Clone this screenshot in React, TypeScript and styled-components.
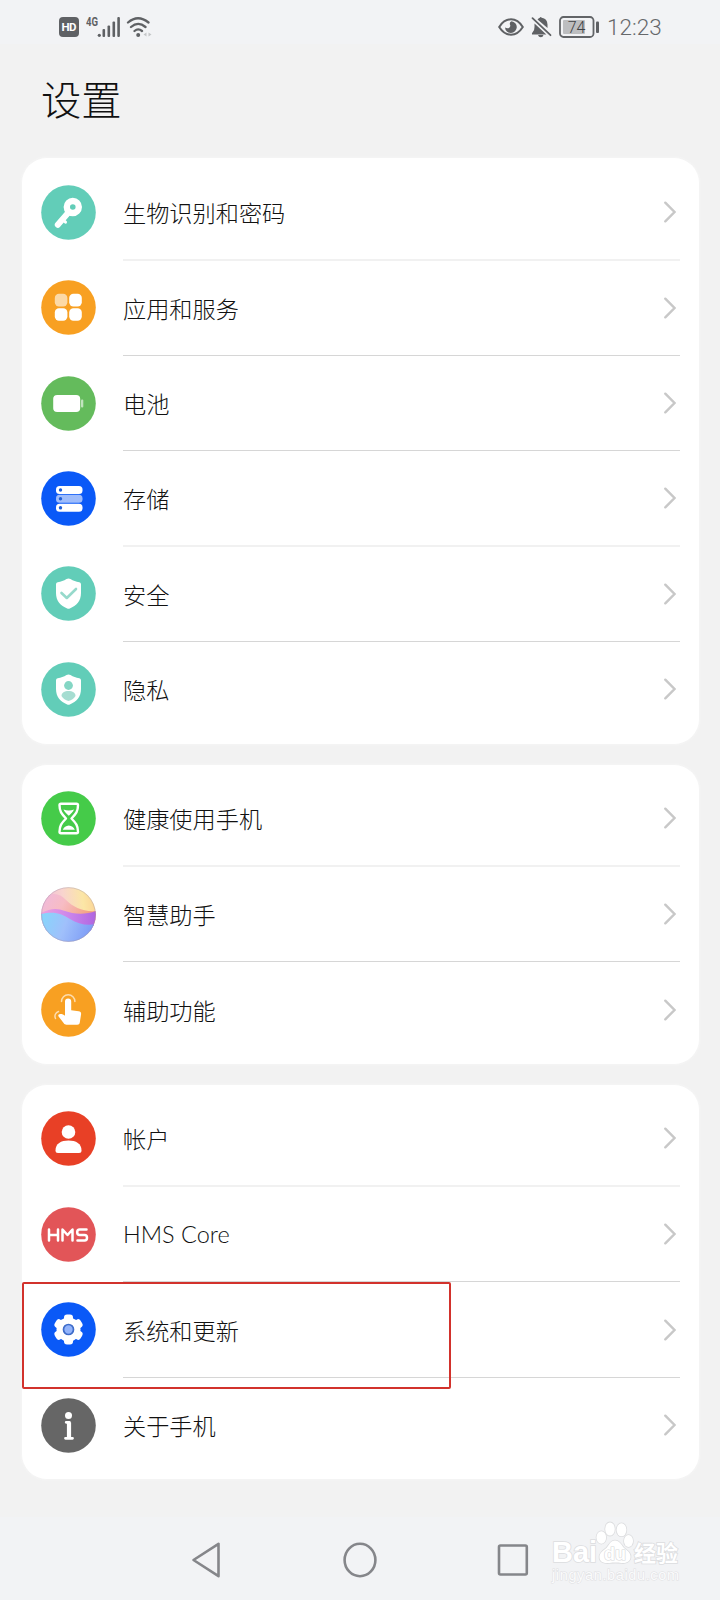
import React from 'react';
import styled, { createGlobalStyle } from 'styled-components';

const GlobalStyle = createGlobalStyle`
  * { box-sizing: border-box; }
  body {
    margin: 0;
    background: #f2f2f2;
    font-family: "Noto Sans CJK SC", sans-serif;
    color: #111;
  }
`;

const Screen = styled.div`
  position: relative;
  width: 720px;
  height: 1600px;
  overflow: hidden;
  background: #f2f2f2;
  display: flex;
  flex-direction: column;

  > * { flex: none; }
`;

const StatusBar = styled.header`
  height: 44px;
  padding: 9px 59px 0 59px;
  background: #f2f3f5;
  display: flex;
  justify-content: space-between;
`;

const StatusGroup = styled.div`
  display: flex;
  height: 35px;
  align-items: center;
`;

const StatusSvg = styled.svg<{ $gap?: number }>`
  display: block;
  margin-left: ${(p) => p.$gap ?? 0}px;
`;

const Clock = styled.span`
  width: 54px;
  margin-left: 7px;
  font: 300 22.5px/36px Roboto, sans-serif;
  color: #66686b;
  white-space: nowrap;
`;

const Title = styled.h1`
  margin: 0;
  height: 114px;
  padding: 24px 0 0 41px;
  font-size: 40.3px;
  line-height: 60px;
  font-weight: 300;
`;

const Card = styled.section<{ $height: number }>`
  height: ${(p) => p.$height}px;
  margin: 0 21px 21px 22px;
  padding: 7.2px 19px 0 18.7px;
  border-radius: 25px;
  background: #fff;
  box-shadow: 0 0 3px #fafafa;
`;

const Row = styled.div`
  display: flex;
  align-items: center;
  height: 95.4px;
`;

const Badge = styled.svg`
  flex: none;
  width: 55px;
  height: 55px;
  margin-top: -1px;
`;

const RowBody = styled.div<{ $line: 'none' | 'thin' | 'soft' }>`
  flex: 1;
  height: 100%;
  margin-left: 27.3px;
  padding-right: 4px;
  display: flex;
  align-items: center;
  justify-content: space-between;
  border-bottom: ${(p) =>
    p.$line === 'none' ? '1px solid transparent' : p.$line === 'soft' ? '2px solid #f1f1f1' : '1px solid #d6d6d6'};
`;

const Label = styled.span<{ $latin?: boolean }>`
  font-size: 23.2px;
  line-height: 34px;
  font-weight: 300;
  white-space: nowrap;
  ${(p) => p.$latin && 'font-family: Lato, sans-serif; font-size: 23.5px; letter-spacing: 0;'}
`;

const Chevron = styled.svg`
  width: 12px;
  height: 22px;
`;

const NavBar = styled.nav`
  margin-top: 17px;
  height: 84px;
  padding: 3px 191px 0 191px;
  background: #f2f3f5;
  display: flex;
  align-items: center;
  justify-content: space-between;
`;

const Highlight = styled.div`
  position: absolute;
  left: 22px;
  top: 1281.5px;
  width: 429px;
  height: 107px;
  border: 2px solid #d2322c;
  border-radius: 2px;
`;

const Watermark = styled.svg`
  position: absolute;
  left: 545px;
  top: 1515px;
`;

const teal = '#62cdb8';
const shield = 'M27.5 12.5c.7 0 1.300.2 2 .6 2.800 1.700 5.500 2.600 8.700 3.200 1.200.3 1.800 1 1.800 2.200v8.500c0 8-4.500 12.500-11.200 15.500q-1.300.6-2.600 0C19.500 39.500 15 35 15 27v-8.500c0-1.200.6-1.900 1.800-2.200 3.200-.6 5.900-1.500 8.700-3.200.7-.4 1.300-.6 2-.6z';

const KeyIcon = () => (
  <g fill="none" stroke="#fff">
    <circle cx="31.800" cy="22" r="6" strokeWidth="6.400" />
    <path d="M27 28 L16.800 39.800" strokeWidth="6" strokeLinecap="round" />
    <path d="M21 34l3.500 3.200" strokeWidth="3" strokeLinecap="round" />
  </g>
);

const AppsIcon = () => (
  <g fill="#fff">
    <rect x="13.800" y="13.800" width="12.600" height="12.600" rx="4.200" opacity=".6" />
    <rect x="28.200" y="13.800" width="12.600" height="12.600" rx="4.200" />
    <rect x="13.800" y="28.200" width="12.600" height="12.600" rx="4.200" />
    <rect x="28.200" y="28.200" width="12.600" height="12.600" rx="4.200" />
  </g>
);

const BatteryIcon = () => (
  <g fill="#fff">
    <rect x="12.200" y="19" width="27" height="17" rx="4" />
    <rect x="40" y="23.500" width="2.300" height="8" rx="1" opacity=".6" />
  </g>
);

const StorageIcon = () => (
  <g>
    {[15, 23.800, 32.800].map((y, i) => (
      <g key={y}>
        <rect x="15" y={y} width="26.500" height="8" rx="3.500" fill={i === 1 ? '#9ebcfb' : '#fff'} />
        <circle cx="19.500" cy={y + 4} r="1.700" fill="#1f5fd8" />
      </g>
    ))}
  </g>
);

const SecurityIcon = () => (
  <g>
    <path d={shield} fill="#fff" />
    <path d="M20.500 27l5.300 5 9.200-9" fill="none" stroke="#96d9cb" strokeWidth="2.600" strokeLinecap="round" strokeLinejoin="round" />
  </g>
);

const PrivacyIcon = () => (
  <g>
    <path d={shield} fill="#fff" />
    <circle cx="27.500" cy="23.500" r="4.400" fill="#84d6c4" />
    <path d="M20.500 34c0-3.500 3-5 7-5s7 1.500 7 5c-1.500 2.600-4 4.500-7 5-3-.5-5.500-2.400-7-5z" fill="#a6ddd1" />
  </g>
);

const HourglassIcon = () => (
  <g fill="none" stroke="#fff" strokeWidth="2.400" strokeLinejoin="round">
    <path d="M20 12.800h15.500q1.500 0 1.500 1.500c0 6-2 8.500-6.500 13.200 4.500 4.700 6.500 7.200 6.500 13.200q0 1.500-1.500 1.500H20q-1.500 0-1.500-1.500c0-6 2-8.500 6.500-13.200-4.500-4.700-6.500-7.200-6.500-13.200q0-1.500 1.500-1.500z" />
    <path d="M22.500 18.500q5.300 2 10.500 0c-1 2.500-3 4-5.200 6.300-2.300-2.300-4.300-3.800-5.300-6.300zM21.800 38.800q1.700-4 6-4.400 4.300.4 6 4.400z" fill="#fff" stroke="none" />
  </g>
);

const AssistantIcon = () => (
  <>
    <defs>
      <clipPath id="orb"><circle cx="27.500" cy="27.500" r="27.300" /></clipPath>
      <linearGradient id="sky" x1="0" y1=".2" x2="1" y2=".1">
        <stop offset="0" stopColor="#efb9d8" /><stop offset=".4" stopColor="#f8d4ce" /><stop offset=".75" stopColor="#fbe6a6" /><stop offset="1" stopColor="#fbd293" />
      </linearGradient>
      <linearGradient id="dusk" x1="0" y1="0" x2="1" y2=".35">
        <stop offset="0" stopColor="#efbade" /><stop offset=".45" stopColor="#f7bcc4" /><stop offset="1" stopColor="#f3a07c" />
      </linearGradient>
      <linearGradient id="violet" x1="0" y1="0" x2="1" y2="0">
        <stop offset="0" stopColor="#f0a0dc" /><stop offset=".5" stopColor="#cb86ec" /><stop offset="1" stopColor="#b065e0" />
      </linearGradient>
      <linearGradient id="sea" x1="0" y1="0" x2="1" y2=".2">
        <stop offset="0" stopColor="#85d7fb" /><stop offset=".5" stopColor="#a0c0fb" /><stop offset="1" stopColor="#7d9cf6" />
      </linearGradient>
    </defs>
    <g clipPath="url(#orb)">
      <rect width="55" height="55" fill="url(#sky)" />
      <path d="M0 14C10 4 18 6 25 13s17 12 30 11v15H0z" fill="url(#dusk)" />
      <path d="M0 26c10-5 16-5 24-2s20 4 31 0v20H0z" fill="url(#violet)" />
      <path d="M0 27c14-3 21 0 29 5s17 7 26 5v18H0z" fill="url(#sea)" />
    </g>
    <circle cx="27.500" cy="27.500" r="26.900" fill="none" stroke="#9a8fa8" strokeOpacity=".45" strokeWidth=".8" />
  </>
);

const TouchIcon = () => (
  <g fill="#fff">
    <path d="M24 19.500a3.100 3.100 0 0 1 6.200 0v8.700l7.500 1c1.800.3 2.600 1.300 2.400 3l-1.300 8.300c-.3 1.500-1 2.200-2.600 2.200H25.500c-1.300 0-2-.4-2.700-1.400l-5.200-6.800c-.8-1.300 0-2.500 1.500-2.600 2-.1 3.400.4 4.900 1.800z" />
    <path d="M20.500 19.500a6.700 6.700 0 0 1 13.400 0M17.500 29.500a5 5 0 0 0-3 7" fill="none" stroke="#fcdcae" strokeWidth="1.500" strokeLinecap="round" />
  </g>
);

const AccountIcon = () => (
  <g fill="#fff">
    <circle cx="27.500" cy="21" r="6.800" />
    <path d="M14.500 39.500C14.500 32.500 20 29.500 27.500 29.500s13 3 13 10q0 2.500-2.500 2.500H17q-2.500 0-2.500-2.500z" />
  </g>
);

const HmsIcon = () => (
  <g fill="none" stroke="#fff" strokeWidth="2.500" strokeLinecap="round" strokeLinejoin="round">
    <path d="M8 22.500v11M17 22.500v11M8 28h9M21.500 33.500v-11l5 5.500 5-5.500v11" />
    <path d="M45.500 22.500h-6.800q-2.500 0-2.500 2.700t2.500 2.800h4.800q2.500 0 2.500 2.700t-2.500 2.800h-7" />
  </g>
);

const GearIcon = () => (
  <g>
    <g fill="#fff">
      <circle cx="27.500" cy="27.500" r="12" />
      {[0, 60, 120].map((a) => (
        <rect key={a} x="23" y="12.600" width="9" height="29.800" rx="3" transform={`rotate(${a} 27.500 27.500)`} />
      ))}
    </g>
    <circle cx="27.500" cy="27.500" r="5" fill="#92b3fb" stroke="#3e6cc9" strokeWidth="1.700" />
  </g>
);

const InfoIcon = () => (
  <g>
    <circle cx="27.500" cy="17.500" r="3.500" fill="#fff" />
    <path d="M25.200 24.300h3.200v16M24.500 40.300h7" fill="none" stroke="#fff" strokeWidth="2.800" strokeLinecap="round" strokeLinejoin="round" />
    <path d="M28 24.500v15.500" stroke="#fff" strokeWidth="4.200" />
  </g>
);

type Item = { label: string; color: string; Icon: React.FC; latin?: boolean; soft?: boolean };

const groups: { height: number; items: Item[] }[] = [
  {
    height: 585.5,
    items: [
      { label: '生物识别和密码', color: teal, Icon: KeyIcon, soft: true },
      { label: '应用和服务', color: '#f8a022', Icon: AppsIcon },
      { label: '电池', color: '#64bb5c', Icon: BatteryIcon },
      { label: '存储', color: '#0a59f7', Icon: StorageIcon, soft: true },
      { label: '安全', color: teal, Icon: SecurityIcon },
      { label: '隐私', color: teal, Icon: PrivacyIcon },
    ],
  },
  {
    height: 299,
    items: [
      { label: '健康使用手机', color: '#45cb49', Icon: HourglassIcon, soft: true },
      { label: '智慧助手', color: '#fff', Icon: AssistantIcon },
      { label: '辅助功能', color: '#f8a022', Icon: TouchIcon },
    ],
  },
  {
    height: 394,
    items: [
      { label: '帐户', color: '#e84026', Icon: AccountIcon, soft: true },
      { label: 'HMS Core', color: '#e25558', Icon: HmsIcon, latin: true },
      { label: '系统和更新', color: '#0a59f7', Icon: GearIcon },
      { label: '关于手机', color: '#666', Icon: InfoIcon },
    ],
  },
];

const SettingsRow = ({ item, last }: { item: Item; last: boolean }) => (
  <Row>
    <Badge viewBox="0 0 55 55">
      <circle cx="27.500" cy="27.500" r="27.300" fill={item.color} />
      <item.Icon />
    </Badge>
    <RowBody $line={last ? 'none' : item.soft ? 'soft' : 'thin'}>
      <Label $latin={item.latin}>{item.label}</Label>
      <Chevron viewBox="0 0 12 22" fill="none" stroke="#c8c8c8" strokeWidth="2.400" strokeLinecap="round">
        <path d="M1.300 1.700 L10.500 11 L1.300 20.300" />
      </Chevron>
    </RowBody>
  </Row>
);

export default function App() {
  return (
    <Screen>
      <GlobalStyle />
      <StatusBar>
        <StatusGroup>
          <StatusSvg width="20" height="20" viewBox="0 0 20 20">
            <rect width="20" height="20" rx="4" fill="#5f6164" />
            <text x="10" y="14.200" textAnchor="middle" textLength="15" fontFamily="Roboto" fontWeight="700" fontSize="11.500" fill="#fff">HD</text>
          </StatusSvg>
          <StatusSvg $gap={7} width="35" height="24" viewBox="0 0 35 24">
            <text x="0" y="11" fontFamily="Roboto" fontWeight="700" fontSize="13" textLength="12" lengthAdjust="spacingAndGlyphs" fill="#5f6164">4G</text>
            <g fill="#5f6164">
              <circle cx="13.300" cy="20.300" r="1.600" />
              <rect x="16.500" y="14" width="2.600" height="8" rx="1" />
              <rect x="21.500" y="10.500" width="2.600" height="11.500" rx="1" />
              <rect x="26.500" y="6.500" width="2.600" height="15.500" rx="1" />
              <rect x="31.300" y="2" width="2.600" height="20" rx="1" />
            </g>
          </StatusSvg>
          <StatusSvg $gap={5} width="27" height="22" viewBox="0 0 27 22" fill="none" stroke="#5f6164" strokeWidth="2.300" strokeLinecap="round">
            <path d="M2 6.500q10-8.600 20.500 0M5 11q7.200-6.200 14.500 0M8.500 15q3.700-3.200 7.500 0" />
            <circle cx="12.200" cy="19" r="2" fill="#5f6164" stroke="none" />
            <path d="M20.500 16.500v4l-3-2zM22.500 16.500v4l3-2z" fill="#c4c6c8" stroke="none" />
          </StatusSvg>
        </StatusGroup>
        <StatusGroup>
          <StatusSvg width="26" height="18" viewBox="0 0 26 18">
            <path d="M1.200 9Q6 1.300 13 1.300T24.800 9Q20 16.700 13 16.700T1.200 9z" fill="none" stroke="#5f6164" strokeWidth="2" />
            <path d="M13.500 3.200a5.900 5.900 0 1 1-6.500 6.300q2.500 1.500 4.300.2t.4-3.800q0-1.900 1.800-2.700z" fill="#5f6164" />
          </StatusSvg>
          <StatusSvg $gap={7} width="21" height="22" viewBox="0 0 21 22">
            <path d="M6.500 3.500Q8 2 8.800 1.800q.8-1.500 1.900 0 5.500.8 5.800 6.700v3.500zM3.500 7.500l11.800 11H1q-.5-1.500.8-2.500 1.700-1.500 1.700-5z" fill="#5f6164" />
            <path d="M7 19h5.500q-.5 2.200-2.700 2.200T7 19z" fill="#5f6164" />
            <path d="M1.500 2.200l18 17" stroke="#5f6164" strokeWidth="1.800" strokeLinecap="round" />
          </StatusSvg>
          <StatusSvg $gap={7} width="41" height="22" viewBox="0 0 41 22">
            <rect x="1" y="1" width="33.500" height="20" rx="3.500" fill="none" stroke="#626467" strokeWidth="1.800" />
            <rect x="4" y="4" width="22" height="14" rx="1" fill="#bdbec0" />
            <rect x="37" y="5.500" width="3" height="11.500" rx="1" fill="#5f6164" />
            <text x="17.600" y="16.700" textAnchor="middle" fontFamily="Roboto" fontWeight="300" fontSize="16" fill="#404245">74</text>
          </StatusSvg>
          <Clock>12:23</Clock>
        </StatusGroup>
      </StatusBar>
      <Title>设置</Title>
      {groups.map((group) => (
        <Card key={group.items[0].label} $height={group.height}>
          {group.items.map((item, i) => (
            <SettingsRow key={item.label} item={item} last={i === group.items.length - 1} />
          ))}
        </Card>
      ))}
      <NavBar>
        <svg width="31" height="38" viewBox="0 0 31 38" fill="none" stroke="#85868a" strokeWidth="2.600" strokeLinejoin="round">
          <path d="M27.500 2.800v32.400L2.500 19z" />
        </svg>
        <svg width="34" height="38" viewBox="0 0 34 38" fill="none" stroke="#85868a" strokeWidth="2.600">
          <ellipse cx="17" cy="19" rx="15.400" ry="16.200" />
        </svg>
        <svg width="32" height="34" viewBox="0 0 32 34" fill="none" stroke="#85868a" strokeWidth="2.600">
          <rect x="2" y="2.500" width="27.800" height="29" rx="1.500" />
        </svg>
      </NavBar>
      <Highlight />
      <Watermark width="145" height="75" viewBox="0 0 145 75">
        <g fill="#fff" stroke="#dcdddf" strokeWidth="1.600" paintOrder="stroke" fontFamily="Liberation Sans, 'Noto Sans CJK SC', sans-serif" fontWeight="700">
          <text x="7" y="47" fontSize="29" textLength="45" lengthAdjust="spacingAndGlyphs">Bai</text>
          <ellipse cx="56.300" cy="22.500" rx="4.800" ry="6.200" />
          <ellipse cx="65" cy="14" rx="4.800" ry="6.600" />
          <ellipse cx="76.500" cy="14.800" rx="4.900" ry="6.500" />
          <ellipse cx="83.500" cy="26" rx="4.500" ry="6" />
          <path d="M70 25.500c4.500 0 6 4 9 7.500 3.500 2.800 7 5 6.500 9.500-.5 4.500-5 6-9 5.500-4.500-.6-8-.6-12 0-5.500.6-10-1-10-6 0-4 3.500-6.500 7-9 2.800-3.300 4-7.500 8.500-7.500z" />
          <text x="89" y="46" fontFamily="Noto Sans CJK SC" fontSize="22" textLength="44">经验</text>
        </g>
        <text x="70" y="45" textAnchor="middle" fontFamily="Liberation Sans" fontWeight="700" fontSize="18" fill="#fff" stroke="#d8d9db" strokeWidth="1.200" paintOrder="stroke">du</text>
        <text x="7" y="65" fontFamily="Liberation Sans" fontSize="14.500" textLength="127" fill="#fbfbfc" stroke="#dfe0e2" strokeWidth="1" paintOrder="stroke">jingyan.baidu.com</text>
      </Watermark>
    </Screen>
  );
}
